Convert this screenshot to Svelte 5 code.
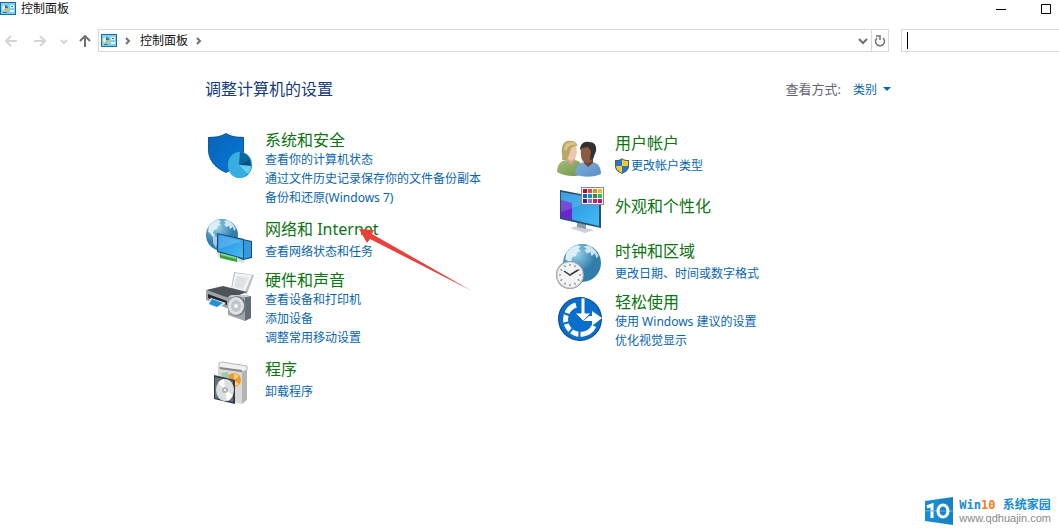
<script lang="ts">
    let search = $state('');

    const columns = [
        [
            { icon: 'security', title: '系统和安全', links: ['查看你的计算机状态', '通过文件历史记录保存你的文件备份副本', '备份和还原(Windows 7)'] },
            { icon: 'network', title: '网络和 Internet', links: ['查看网络状态和任务'], arrow: true },
            { icon: 'hardware', title: '硬件和声音', links: ['查看设备和打印机', '添加设备', '调整常用移动设置'] },
            { icon: 'programs', title: '程序', links: ['卸载程序'] },
        ],
        [
            { icon: 'users', title: '用户帐户', links: ['更改帐户类型'], admin: true },
            { icon: 'display', title: '外观和个性化', links: [] },
            { icon: 'clock', title: '时钟和区域', links: ['更改日期、时间或数字格式'] },
            { icon: 'access', title: '轻松使用', links: ['使用 Windows 建议的设置', '优化视觉显示'] },
        ],
    ];

    // Colour swatches on the personalization icon
    const swatches = ['#b3122f', '#dc4b48', '#d3902b', '#e0c51d', '#1d5fc4', '#1493b5', '#3f8f16', '#25bd68', '#3b1a9b', '#8876b8', '#c81672', '#d00a8e'];
    const spokes = [22, 58, 94, 130];
    const ticks = Array.from({ length: 12 }, (_, i) => i * 30);
</script>

{#snippet panelIcon()}
    <svg class="panel-icon" viewBox="0 0 16 13" aria-hidden="true">
        <rect x="0.5" y="0.5" width="15" height="12" fill="#84cdf3" stroke="#14709f" />
        <circle cx="5" cy="6" r="3" fill="#dff0dc" />
        <path d="M5 6V3a3 3 0 0 1 3 3z" fill="#2873a5" />
        <path d="M5 6h3a3 3 0 0 1-4 3z" fill="#dfb639" />
        <path d="M10 3h4v3h-4zM10 8h4v2h-4z" fill="#e9f8ff" />
        <path d="M11 4h2v1h-2zM3 10h4v1H3z" fill="#257aac" />
    </svg>
{/snippet}

{#snippet globe(cx: number, cy: number, r: number)}
    <circle {cx} {cy} {r} fill="url(#globe-blue)" />
    <g transform="translate({cx - r} {cy - r}) scale({r / 16})" fill="#dceef8">
        <path d="M3 7l4-4 5-2 3 1-2 2 2 2-3 1-1 3-3 1-1 3 2 2-2 2-3-4-2-1z" />
        <path d="M17 2l5-1 5 4 3 5-2 2-1-4-3 2-1-3-3 1-2-3 2-1z" opacity=".9" />
        <path d="M7 17l5 1 2 4-3 3-1 4-3-5z" opacity=".65" />
    </g>
{/snippet}

{#snippet categoryIcon(name: string)}
    <svg class="category-icon" viewBox="0 0 48 48" aria-hidden="true">
        {#if name === 'security'}
            <path d="M3 7c7 0 13-1 18-4 5 3 11 4 18 4v14c0 10-7 17-18 22C10 38 3 30 3 20z" fill="#085b9d" />
            <path d="M4 8c7 0 12-1 17-4 5 3 10 4 17 4v13c0 9-6 16-17 21C11 37 4 30 4 20z" fill="url(#shield-blue)" />
            <ellipse cx="35" cy="35" rx="12" ry="13" fill="#168fc5" />
            <ellipse cx="34" cy="35" rx="11" ry="13" fill="#36aee0" />
            <path d="M34 35l1-13c4 0 8 3 10 7z" fill="#08679e" />
            <path d="M34 35l11-6 1 7z" fill="#0b4f83" />
            <path d="M34 35l12 1c0 3-1 6-3 8z" fill="#65cff0" />
        {:else if name === 'network'}
            {@render globe(17, 19, 16)}
            <path d="M13 36l4-1 17 5 6 2v4l-3 1-20-5-4-1z" fill="#d9e0e2" />
            <path d="M15 36l17 5v5l-17-4z" fill="#38a33c" />
            <path d="M16 37l15 4v2l-15-4z" fill="#8ad98c" />
            <path d="M33 22l14 3v17l-9 2-5-2z" fill="#164f75" />
            <path d="M34 23l12 3v15l-8 2-4-2z" fill="#3599df" />
            <path d="M12 17l27 6v20l-27-7z" fill="#164f75" />
            <path d="M13 18l25 6v18l-25-7z" fill="url(#screen-blue)" />
            <path d="M14 19l23 6-23 8z" fill="#a0dcff" opacity=".3" />
        {:else if name === 'hardware'}
            <path d="M29 2l20 3-7 19-16-5z" fill="#b8bfc5" />
            <path d="M30 3l17 2-7 17-13-4z" fill="#f0f1f3" />
            <path d="M32 6l11 2-5 11-9-2z" fill="#dfe2e4" />
            <path d="M1 20l17-4 24 6-18 7z" fill="#4d5359" />
            <path d="M1 20l23 8v11L1 30z" fill="#9ba2a8" />
            <path d="M3 24l19 7v4L3 28z" fill="#25282b" />
            <path d="M6 28l15 5-8 5-11-4z" fill="#e7f4fa" />
            <path d="M7 29l11 4-6 4-8-3z" fill="#2492cf" />
            <path d="M23 27l17-2v26l-17-6z" fill="#a0a6ab" />
            <path d="M23 27l3-2h19l-5 2z" fill="#c6cbce" />
            <path d="M40 27l6-1v22l-6 3z" fill="#656c72" />
            <ellipse cx="32" cy="36" rx="9" ry="10" fill="#737a80" />
            <ellipse cx="31" cy="36" rx="8" ry="9" fill="#dfe2e4" />
            <ellipse cx="31" cy="36" rx="5" ry="6" fill="#bfc5ca" />
            <circle cx="31" cy="36" r="2" fill="#f8f8f8" />
        {:else if name === 'programs'}
            <path d="M13 11l24 3v34l-24-5z" fill="#d8d9d8" />
            <path d="M37 14l5-3v33l-5 4z" fill="#b3b5b5" />
            <path d="M14 7l3-1 25 4v4l-5 2-23-4z" fill="#f0f0ef" stroke="#b7b8b8" />
            <path d="M15 11l22 3v2l-22-3z" fill="#858787" />
            <circle cx="29" cy="24" r="7" fill="#f19a26" />
            <path d="M29 24v-7l5 3zM29 24l5 4-4 2z" fill="#ffd28a" />
            <path d="M16 17l7-1 2 8-6 2z" fill="#9acaa6" />
            <path d="M9 19l21 5v24L9 43z" fill="#303b45" />
            <path d="M10 21l18 4v21l-18-4z" fill="#657480" />
            <ellipse cx="20" cy="34" rx="9" ry="11" fill="#dcdfe0" />
            <path d="M20 34l-7-7a9 11 0 0 1 6-4zM20 34l8 5a9 11 0 0 1-6 6z" fill="#fff" />
            <circle cx="20" cy="34" r="3" fill="#afb7bb" />
            <circle cx="20" cy="34" r="1" fill="#fff" />
        {:else if name === 'users'}
            <path d="M2 42c0-8 4-12 11-12h6c6 0 9 5 9 14-6 3-18 3-26-2z" fill="url(#user-green)" />
            <path d="M20 44c0-8 5-12 11-12h5c7 0 10 5 10 12-6 3-19 4-26 0z" fill="url(#user-blue)" />
            <path d="M29 29h9v4l-5 4-4-4z" fill="#6d4936" />
            <path d="M26 17l11-3 2 9c0 6-3 10-7 10-5 0-7-5-6-16z" fill="#875c43" />
            <path d="M25 20c0-6 4-9 9-8 5 0 8 3 7 9l-3 8-3 1 1-9-3-4-6 1z" fill="#33302f" />
            <path d="M12 27h8v4l-4 4-4-4z" fill="#d4a18c" />
            <path d="M13 16l8-1 1 8-2 6-4 2-5-3z" fill="#ecc7ae" />
            <path d="M7 30c1-4-1-7 0-12 1-6 5-8 9-7 4 0 6 2 6 5-5 0-6 2-7 6l-3 8z" fill="#b7a665" />
            <path d="M9 20c0-5 3-8 7-8 3 0 5 1 5 3-5-1-8 1-10 6z" fill="#d4c68b" />
        {:else if name === 'display'}
            <path d="M15 44l8-2 16 4-9 3z" fill="#c8d1d8" />
            <path d="M22 37l9 2v6l-9-2z" fill="#8b9aa6" />
            <path d="M5 6l41 8v30L5 35z" fill="#275274" />
            <path d="M6 8l38 7v27L6 33z" fill="url(#screen-blue)" />
            <path d="M6 16l11 3v17L6 33z" fill="#6c24cd" />
            <path d="M6 8l38 7L6 28z" fill="#a6edff" opacity=".2" />
            <rect x="26.5" y="3.5" width="22" height="17" fill="#fff" stroke="#8c8789" />
            {#each swatches as color, i}
                <rect x={28 + (i % 4) * 5} y={5 + Math.floor(i / 4) * 5} width="4" height="4" fill={color} />
            {/each}
        {:else if name === 'clock'}
            {@render globe(27, 25, 19)}
            <circle cx="15" cy="37" r="14" fill="#899198" />
            <circle cx="15" cy="37" r="13" fill="#f2f3f4" stroke="#c5cbd0" />
            {#each ticks as angle}
                <path d="M15 26v2" stroke="#697078" transform="rotate({angle} 15 37)" />
            {/each}
            <path d="M9 33l6 4 8-5" fill="none" stroke="#343a40" stroke-width="1.5" />
            <circle cx="15" cy="37" r="1" fill="#9d4545" />
        {:else}
            <circle cx="25" cy="27" r="22" fill="#07468f" />
            <circle cx="25" cy="27" r="21" fill="#086fca" />
            <path d="M21 13A15 15 0 1 0 39 34" fill="none" stroke="#fff" stroke-width="5" />
            {#each spokes as angle}
                <path d="M25 35v11" stroke="#086fca" stroke-width="2" transform="rotate({angle - 20} 25 27)" />
            {/each}
            <path d="M26 6h4v15h6l-8 8-8-8h6z" fill="#fff" stroke="#086fca" />
            <path d="M28 29l6-5h3v-5l10 7-10 8v-5z" fill="#fff" />
        {/if}
    </svg>
{/snippet}

<svg class="defs" aria-hidden="true">
    <defs>
        <radialGradient id="globe-blue" cx=".35" cy=".25"><stop stop-color="#9bd4eb" /><stop offset="1" stop-color="#317eac" /></radialGradient>
        <linearGradient id="shield-blue" x2="1" y2="1"><stop stop-color="#0764b8" /><stop offset="1" stop-color="#0878d7" /></linearGradient>
        <linearGradient id="screen-blue" x2="1" y2="1"><stop stop-color="#2488dc" /><stop offset="1" stop-color="#45bdf5" /></linearGradient>
        <linearGradient id="user-green" x2="1" y2="1"><stop stop-color="#a5bd77" /><stop offset="1" stop-color="#6f964e" /></linearGradient>
        <linearGradient id="user-blue" x2="1" y2="1"><stop stop-color="#7cafda" /><stop offset="1" stop-color="#5c8fc3" /></linearGradient>
    </defs>
</svg>

<div class="window">
    <header class="titlebar">
        {@render panelIcon()}
        <span class="window-title">控制面板</span>
        <div class="window-controls">
            <button aria-label="最小化"><svg viewBox="0 0 10 10"><path d="M0 5.5h10" /></svg></button>
            <button aria-label="最大化"><svg viewBox="0 0 10 10"><path d="M.5.5h9v9h-9z" /></svg></button>
        </div>
    </header>

    <nav class="toolbar">
        <div class="history">
            <button aria-label="后退" disabled><svg viewBox="0 0 12 12"><path d="M12 6H1M6 1L1 6l5 5" /></svg></button>
            <button aria-label="前进" disabled><svg viewBox="0 0 12 12"><path d="M0 6h11M6 1l5 5-5 5" /></svg></button>
            <button class="recent" aria-label="最近" disabled><svg viewBox="0 0 12 12"><path d="M3 5l3 3 3-3" /></svg></button>
            <button class="up" aria-label="上移"><svg viewBox="0 0 12 12"><path d="M6 12V1M1 6l5-5 5 5" /></svg></button>
        </div>
        <div class="address">
            {@render panelIcon()}
            <svg class="crumb-arrow" viewBox="0 0 6 8" aria-hidden="true"><path d="M1 1l3 3-3 3" /></svg>
            <a class="crumb" href="#panel">控制面板</a>
            <svg class="crumb-arrow" viewBox="0 0 6 8" aria-hidden="true"><path d="M1 1l3 3-3 3" /></svg>
            <button class="expand" aria-label="展开"><svg viewBox="0 0 12 12"><path d="M2 4l4 4 4-4" /></svg></button>
            <button class="refresh" aria-label="刷新"><svg viewBox="0 0 12 12"><path d="M9 3a4.5 4.5 0 1 1-6 0M2 1h4v4" /></svg></button>
        </div>
        <div class="search">
            <span class="caret"></span>
            <input aria-label="搜索控制面板" bind:value={search} />
        </div>
    </nav>

    <main id="panel">
        <div class="heading">
            <h1>调整计算机的设置</h1>
            <div class="view-by">
                <span>查看方式:</span>
                <button>类别 <svg viewBox="0 0 8 4" aria-hidden="true"><path d="M0 0h8L4 4z" /></svg></button>
            </div>
        </div>

        <div class="columns">
            {#each columns as column}
                <div class="column">
                    {#each column as category}
                        <section class="category" class:compact={category.links.length < 2} class:solo={category.links.length === 0}>
                            {@render categoryIcon(category.icon)}
                            <div class="details">
                                <h2>
                                    <a href="#{category.icon}">{category.title}</a>
                                    {#if category.arrow}
                                        <svg class="pointer" viewBox="0 0 114 64" aria-hidden="true"><path d="M0 0l15 1-2 4 100 57L11 10l-3 4z" /></svg>
                                    {/if}
                                </h2>
                                {#each category.links as link}
                                    <a class="task" href="#{category.icon}">
                                        {#if category.admin}
                                            <svg class="uac" viewBox="0 0 14 16" aria-hidden="true">
                                                <path d="M7 0c2 2 4 2 7 2v6c0 4-3 6-7 8-4-2-7-4-7-8V2c3 0 5 0 7-2z" fill="#475e70" />
                                                <path d="M7 1v7H1V3c2 0 4 0 6-2zM7 8h6c0 3-2 5-6 7z" fill="#2478c6" />
                                                <path d="M7 1c2 2 4 2 6 2v5H7zM1 8h6v7c-4-2-6-4-6-7z" fill="#f8c638" />
                                            </svg>
                                        {/if}
                                        {link}
                                    </a>
                                {/each}
                            </div>
                        </section>
                    {/each}
                </div>
            {/each}
        </div>
    </main>

    <footer>
        <svg class="brand-logo" viewBox="0 0 28 28" aria-hidden="true">
            <path d="M0 4l14-2v24L0 24z" fill="#168cd5" />
            <path d="M14 2l14-2v28l-14-2z" fill="#1682c8" />
            <path d="M2 10l5-2v13" fill="none" stroke="#fff" stroke-width="3" />
            <path d="M0 14h28" stroke="#58b4e8" />
            <ellipse cx="18" cy="14" rx="5" ry="6" fill="none" stroke="#fff" stroke-width="3" />
        </svg>
        <div class="brand">
            <strong>Win<em>10</em> 系统家园</strong>
            <span>www.qdhuajin.com</span>
        </div>
    </footer>
</div>

<style>
    :global(body) {
        margin: 0;
        background: #fff;
    }
    .window {
        display: flex;
        flex-direction: column;
        min-height: 100vh;
        overflow: hidden;
        font: 12px/19px "Noto Sans", "Noto Sans CJK SC", sans-serif;
        color: #111;
    }
    .defs {
        position: absolute;
        width: 0;
        height: 0;
    }
    button {
        display: flex;
        align-items: center;
        justify-content: center;
        padding: 0;
        border: 0;
        background: none;
        font: inherit;
    }
    a {
        color: #0865b4;
        text-decoration: none;
    }
    a:hover {
        text-decoration: underline;
    }
    .panel-icon {
        width: 16px;
        height: 13px;
        flex: none;
    }
    .titlebar {
        display: flex;
        align-items: center;
        gap: 5px;
        height: 17px;
    }
    .window-controls {
        display: flex;
        gap: 35px;
        margin-left: auto;
        padding-right: 8px;
    }
    .window-controls svg {
        width: 10px;
        height: 10px;
        fill: none;
        stroke: #000;
    }
    .toolbar {
        display: flex;
        align-items: center;
        margin-top: 12px;
    }
    .history {
        display: flex;
        align-items: center;
        width: 98px;
        padding-left: 5px;
        box-sizing: border-box;
    }
    .history button {
        width: 12px;
        margin-right: 17px;
    }
    .history .recent {
        margin: 0 9px 0 -5px;
    }
    .history .up {
        margin: 0;
    }
    .toolbar svg:not(.panel-icon) {
        fill: none;
        stroke: #707070;
        stroke-width: 2;
    }
    .history button svg {
        width: 12px;
        height: 12px;
    }
    .toolbar .history button:disabled svg {
        stroke: #d4d4d4;
    }
    .address,
    .search {
        display: flex;
        align-items: center;
        height: 23px;
        border: 1px solid #d9d9d9;
        box-sizing: border-box;
    }
    .address {
        flex: 1;
        padding-left: 2px;
    }
    .crumb-arrow {
        width: 6px;
        height: 8px;
        margin: 0 9px 0 8px;
    }
    .toolbar .crumb-arrow {
        stroke-width: 1.5;
    }
    .crumb {
        color: #111;
    }
    .expand {
        width: 16px;
        margin-left: auto;
    }
    .refresh {
        width: 17px;
        height: 21px;
        border-left: 1px solid #d9d9d9;
    }
    .expand svg,
    .refresh svg {
        width: 12px;
        height: 12px;
    }
    .toolbar .refresh svg {
        stroke-width: 1.5;
    }
    .search {
        width: 158px;
        margin-left: 12px;
        padding-left: 5px;
        border-right: 0;
    }
    .caret {
        width: 1px;
        height: 17px;
        background: #000;
    }
    .search input {
        flex: 1;
        min-width: 0;
        border: 0;
        outline: 0;
        font: inherit;
    }
    main {
        padding: 27px 168px 0 205px;
    }
    .heading {
        display: flex;
        align-items: center;
        justify-content: space-between;
        height: 20px;
    }
    h1,
    h2 {
        margin: 0;
        font-size: 16px;
        line-height: 20px;
        font-weight: 400;
    }
    h1 {
        color: #143a80;
    }
    .view-by {
        display: flex;
        gap: 12px;
        color: #5f6672;
    }
    .view-by span {
        font-size: 13px;
    }
    .view-by button {
        gap: 6px;
        color: #0865b4;
    }
    .view-by svg {
        width: 8px;
        height: 4px;
        fill: currentColor;
    }
    .columns {
        display: grid;
        grid-template-columns: 350px 1fr;
        margin-top: 31px;
    }
    .column {
        display: flex;
        flex-direction: column;
        gap: 6px;
    }
    .category {
        display: flex;
        gap: 12px;
        padding-bottom: 3px;
    }
    .category-icon {
        width: 48px;
        height: 48px;
        flex: none;
        overflow: visible;
    }
    .compact {
        align-items: center;
        min-height: 48px;
        padding-bottom: 0;
    }
    .compact .task {
        margin-top: 3px;
    }
    .solo h2 {
        padding-bottom: 5px;
    }
    .details {
        white-space: nowrap;
    }
    h2 {
        position: relative;
    }
    h2 a {
        color: #0c7512;
    }
    .task {
        display: flex;
        align-items: center;
        gap: 2px;
    }
    .uac {
        width: 14px;
        height: 16px;
    }
    .pointer {
        position: absolute;
        left: 94px;
        top: 10px;
        width: 114px;
        height: 64px;
        fill: #e8403a;
        pointer-events: none;
    }
    footer {
        display: flex;
        align-items: center;
        justify-content: flex-end;
        gap: 6px;
        margin-top: auto;
        padding: 0 8px 6px 0;
    }
    .brand-logo {
        width: 28px;
        height: 28px;
    }
    .brand {
        display: flex;
        flex-direction: column;
        font-family: "Liberation Sans", "Noto Sans CJK SC", sans-serif;
        font-size: 11px;
        line-height: 12px;
        color: #888;
    }
    .brand strong {
        font-family: "DejaVu Sans Mono", "Noto Sans CJK SC", monospace;
        font-size: 12px;
        line-height: 14px;
        color: #168ad5;
    }
    .brand em {
        font-style: normal;
        color: #f47b20;
    }
</style>
